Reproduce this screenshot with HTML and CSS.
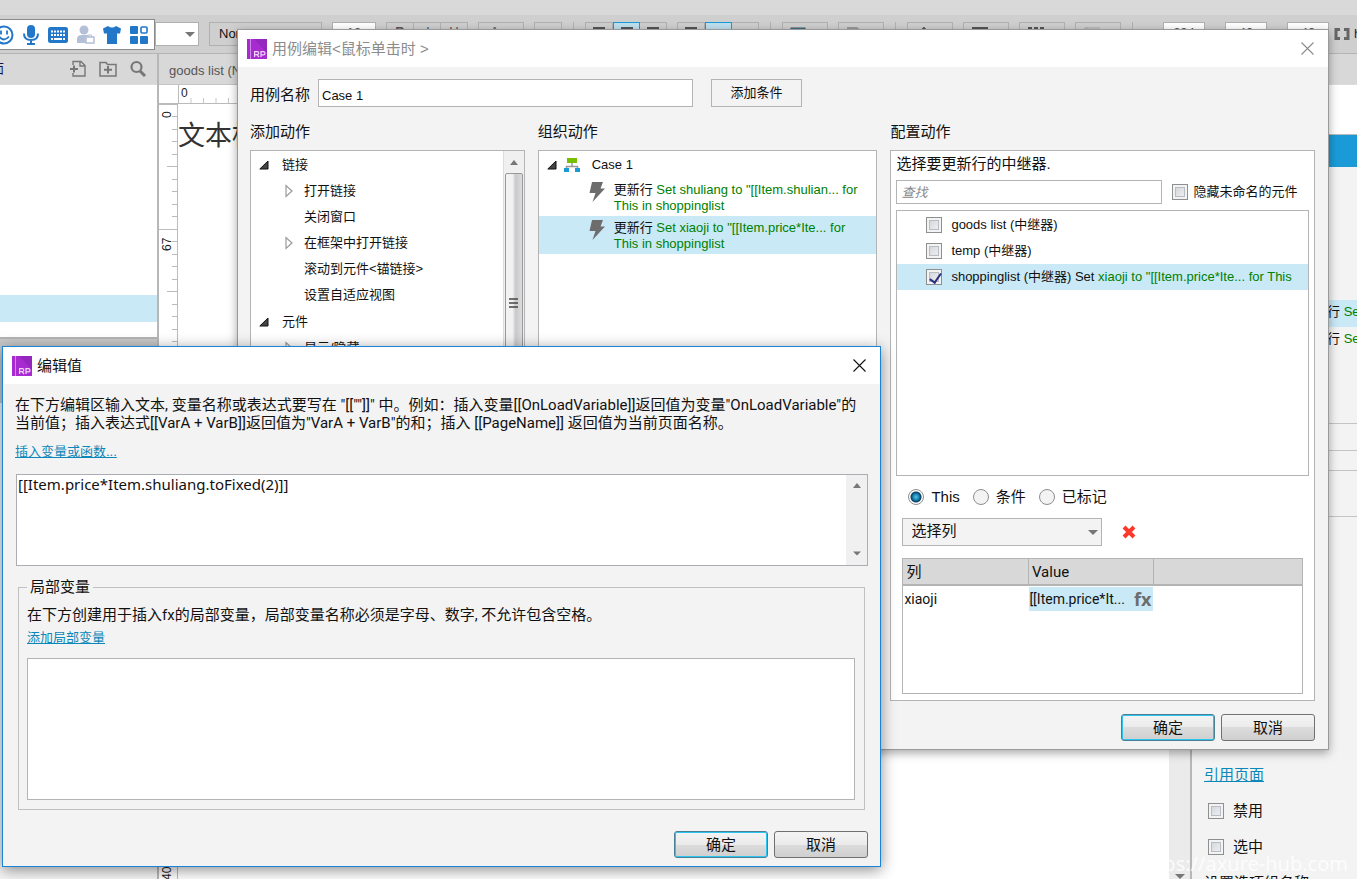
FILE: index.html
```html
<!DOCTYPE html>
<html lang="zh-CN">
<head>
<meta charset="utf-8">
<meta name="viewport" content="width=device-width, initial-scale=1">
<title>用例编辑</title>
<link rel="stylesheet" href="styles.css">
</head>
<body>
<svg class="defs" aria-hidden="true">
  <defs>
    <symbol id="rp" viewBox="0 0 20 20">
      <rect width="20" height="20" fill="#a82bd0"/>
      <path d="M7 0h13v14z" fill="#9427bd"/>
      <path d="M3.5 0v20" stroke="#cf86e6"/>
      <g fill="none" stroke="#f0d4fa" stroke-width="1.2"><path d="M7.6 18v-5.4h2.6q1.6 0 1.6 1.5t-1.6 1.5H7.6M10 15.6l2 2.4M14 18v-5.4h2.4q1.6 0 1.6 1.6t-1.6 1.6H14"/></g>
    </symbol>
    <symbol id="close" viewBox="0 0 13 13"><path d="M.5.5l12 12M12.500.5l-12 12" fill="none" stroke="currentColor" stroke-width="1.1"/></symbol>
    <symbol id="bolt" viewBox="0 0 16 20"><path d="M3 0h11l-2.500 6.500h4.500L3.500 20l3-9H.5z" fill="#6d6d6d"/></symbol>
    <symbol id="open" viewBox="0 0 10 10"><path d="M9 1v8H.8z" fill="#444" stroke="#111"/></symbol>
    <symbol id="shut" viewBox="0 0 8 14"><path d="M1 1.500v11L7 7z" fill="#fff" stroke="#999" stroke-width="1.200"/></symbol>
    <symbol id="up" viewBox="0 0 8 5"><path d="M0 5l4-5 4 5z" fill="#777"/></symbol>
    <symbol id="down" viewBox="0 0 10 5"><path d="M0 0h10L5 5z" fill="#777"/></symbol>
  </defs>
</svg>

<div class="app">
  <div class="menubar"></div>
  <div class="toolbar">
    <div class="tool white combo"><svg class="caret"><use href="#down"/></svg></div>
    <div class="tool style">Normal</div>
    <div class="tool white field">13</div>
    <div class="group"><span class="tool cell letter"><b>B</b></span><span class="tool cell letter"><i>I</i></span><span class="tool cell letter"><u>U</u></span></div>
    <div class="tool wide letter">A</div>
    <div class="tool cell"><svg class="glyph" viewBox="0 0 18 14"><path d="M0 3h3" stroke="#1a9bd8" stroke-width="2"/><path d="M5 3h11M5 8h11" stroke="#555" stroke-width="2"/></svg></div>
    <span class="sep"></span>
    <div class="group">
      <span class="tool cell"><svg class="glyph" viewBox="0 0 18 14"><path d="M3 1h12M3 5h8" stroke="#555" stroke-width="2"/></svg></span>
      <span class="tool cell on"><svg class="glyph" viewBox="0 0 18 14"><path d="M3 1h12M5 5h8" stroke="#555" stroke-width="2"/></svg></span>
      <span class="tool cell"><svg class="glyph" viewBox="0 0 18 14"><path d="M3 1h12M7 5h8" stroke="#555" stroke-width="2"/></svg></span>
    </div>
    <div class="group">
      <span class="tool cell"><svg class="glyph" viewBox="0 0 18 14"><path d="M3 1h12M3 5h12" stroke="#555" stroke-width="2"/></svg></span>
      <span class="tool cell on"><svg class="glyph" viewBox="0 0 18 14"><path d="M4 4h10" stroke="#6aa7c2" stroke-width="2"/></svg></span>
      <span class="tool cell"></span>
    </div>
    <span class="sep"></span>
    <div class="tool wide"><svg class="glyph" viewBox="0 0 18 14"><rect x="1" y="1" width="14" height="12" fill="#1a8fc4" stroke="#555"/></svg></div>
    <div class="tool wide"><svg class="glyph" viewBox="0 0 18 14"><path d="M1 0h10l4 3v11H1z" fill="#999"/></svg></div>
    <span class="sep"></span>
    <div class="tool wide"><svg class="glyph" viewBox="0 0 18 14"><path d="M4 6l5-5 3 4" fill="none" stroke="#555" stroke-width="2"/></svg></div>
    <div class="tool wide"><svg class="glyph" viewBox="0 0 18 14"><path d="M1 0h16v5H1z" fill="#555"/></svg></div>
    <div class="tool wide"><svg class="glyph" viewBox="0 0 18 14"><path d="M1 1h16" stroke="#555" stroke-width="3" stroke-dasharray="4 2"/></svg></div>
    <div class="tool wide"><svg class="glyph" viewBox="0 0 18 14"><path d="M2 1h15M5 0L1 2l4 2" fill="none" stroke="#aaa"/></svg></div>
    <span class="sep"></span>
    <div class="dims"><span class="tool white dim">294</span><span class="tool white dim">40</span><span class="tool white dim">40</span></div>
    <div class="hidden-size"><svg class="bracket" viewBox="0 0 16 12"><path d="M6 1.500H2v9h4M10 1.500h4v9h-4" fill="none" stroke="#666" stroke-width="3"/></svg>h</div>
  </div>

  <div class="workspace">
    <aside class="pages">
      <header class="pane-head">
        <span class="cut">页面</span>
        <svg class="ico" viewBox="0 0 18 18"><path d="M4 5V1.500h8l4 4V16H4v-3M11 1.500V6h5" fill="none" stroke="#777" stroke-width="1.400"/><path d="M1 9h8M5 5.500v7" stroke="#777" stroke-width="2"/></svg>
        <svg class="ico" viewBox="0 0 18 18"><path d="M1 2.500h6l1.500 2H17V16H1z" fill="none" stroke="#777" stroke-width="1.500"/><path d="M5 9.800h8M9 6v7.500" stroke="#777" stroke-width="2"/></svg>
        <svg class="ico" viewBox="0 0 18 18"><circle cx="7.500" cy="7" r="5" fill="none" stroke="#777" stroke-width="2.200"/><path d="M11 11l5 5" stroke="#777" stroke-width="3"/></svg>
      </header>
      <div class="page-list"><div class="cut">list</div><div class="page-on"></div></div>
      <div class="lib-head"></div>
      <div class="lib"></div>
    </aside>
    <main class="canvas">
      <div class="tab">goods list (New)</div>
      <div class="ruler-row">
        <span class="corner"></span>
        <svg class="ruler-h"><defs><pattern id="th" width="12.500" height="18" patternUnits="userSpaceOnUse"><path d="M12.200 13v5" stroke="#bbb"/></pattern></defs><rect width="100%" height="18" fill="url(#th)"/><text x="2" y="12" class="tick">0</text></svg>
      </div>
      <div class="stage-row">
        <svg class="ruler-v">
          <defs><pattern id="tv" width="18" height="125" patternUnits="userSpaceOnUse"><path d="M0 .5h18M13 12.500h5M13 25.500h5M13 37.500h5M13 50.500h5M8 62.500h10M13 75.500h5M13 87.500h5M13 100.500h5M13 112.500h5" stroke="#bbb"/></pattern></defs>
          <rect width="18" height="100%" fill="url(#tv)"/>
          <text class="tick" transform="translate(12 14) rotate(-90)">0</text>
          <text class="tick" transform="translate(12 147) rotate(-90)">67</text>
          <text class="tick" transform="translate(12 776) rotate(-90)">40</text>
        </svg>
        <div class="stage">文本框</div>
        <div class="vscroll"><svg class="caret"><use href="#down"/></svg></div>
      </div>
    </main>
    <aside class="props">
      <div class="pane-head"></div>
      <div class="props-name"></div>
      <div class="props-tab"></div>
      <div class="events">
        <div class="event event-on"><span>行</span> Set</div>
        <div class="event"><span>行</span> Set</div>
      </div>
      <div class="rule r1"></div><div class="rule r2"></div><div class="rule r3"></div><div class="rule r4"></div>
      <div class="props-body">
        <a href="#ref">引用页面</a>
        <label><input class="check" type="checkbox">禁用</label>
        <label><input class="check" type="checkbox">选中</label>
        <span>设置选项组名称</span>
      </div>
    </aside>
  </div>
</div>

<div class="ime">
  <svg class="ime-icon" viewBox="0 0 20 20"><circle cx="10" cy="10" r="8.500" fill="none" stroke="#2277c9" stroke-width="2"/><path d="M7 5.500v4M13 5.500v4M5 11.500q5 6 10 0" fill="none" stroke="#2277c9" stroke-width="1.800"/></svg>
  <svg class="ime-icon" viewBox="0 0 20 20"><rect x="6" y="0" width="8" height="13" rx="4" fill="#2277c9"/><path d="M3 8.500q0 6.500 7 6.500t7-6.500M10 14v5M6 19h8" fill="none" stroke="#2277c9" stroke-width="2"/></svg>
  <svg class="ime-icon" viewBox="0 0 20 20"><rect x="0" y="2" width="20" height="16" rx="2.500" fill="#2277c9"/><path d="M3 6.500h14M3 10h14" stroke="#fff" stroke-width="2" stroke-dasharray="2 1"/><path d="M3 14h2M6 14h8M15 14h2" stroke="#fff" stroke-width="2"/></svg>
  <svg class="ime-icon" viewBox="0 0 20 20"><g fill="#b4c0d8"><circle cx="9" cy="5" r="4.500"/><path d="M2 18v-4q0-4 5-4h4q4 0 4 3v5z"/></g><rect x="11" y="12" width="8" height="6" fill="#fff" stroke="#b4c0d8" stroke-width="1.500"/><path d="M12.500 12v-2h4v2" fill="none" stroke="#b4c0d8"/></svg>
  <svg class="ime-icon" viewBox="0 0 20 20"><path d="M6 1q4 3 8 0l5 2.500-1 5h-3V19H5V8.500H2l-1-5z" fill="#2277c9"/></svg>
  <svg class="ime-icon" viewBox="0 0 20 20"><g fill="#2277c9"><rect x="1" y="1" width="8" height="8" rx="1"/><rect x="1" y="11" width="8" height="8" rx="1"/><rect x="11" y="11" width="8" height="8" rx="1"/></g><rect x="12" y="2" width="6" height="6" rx="1" fill="none" stroke="#2277c9" stroke-width="1.600"/></svg>
</div>

<div class="watermark">https://axure-hub.com</div>

<section class="dialog case-dialog" role="dialog" aria-label="用例编辑">
  <header class="title"><svg class="logo"><use href="#rp"/></svg><span>用例编辑&lt;鼠标单击时 &gt;</span><button class="close" aria-label="关闭"><svg><use href="#close"/></svg></button></header>
  <div class="case-body">
    <div class="name-row">
      <label for="case-name">用例名称</label>
      <input id="case-name" class="name" type="text" value="Case 1">
      <button class="flat">添加条件</button>
    </div>
    <div class="columns">
      <section class="column">
        <h2>添加动作</h2>
        <div class="box split">
          <div class="tree">
            <div class="branch">
              <div class="node"><svg class="open"><use href="#open"/></svg>链接</div>
              <div class="node leaf"><svg class="shut"><use href="#shut"/></svg>打开链接</div>
              <div class="node leaf"><i class="shut"></i>关闭窗口</div>
              <div class="node leaf"><svg class="shut"><use href="#shut"/></svg>在框架中打开链接</div>
              <div class="node leaf"><i class="shut"></i>滚动到元件&lt;锚链接&gt;</div>
              <div class="node leaf"><i class="shut"></i>设置自适应视图</div>
            </div>
            <div class="branch">
              <div class="node"><svg class="open"><use href="#open"/></svg>元件</div>
              <div class="node leaf"><svg class="shut"><use href="#shut"/></svg>显示/隐藏</div>
            </div>
          </div>
          <div class="bar"><svg class="arrow"><use href="#up"/></svg><div class="thumb"><svg class="grip" viewBox="0 0 9 11"><path d="M0 1h9M0 5h9M0 9h9" stroke="#444" stroke-width="1.500"/></svg></div></div>
        </div>
      </section>
      <section class="column">
        <h2>组织动作</h2>
        <div class="box flow-box">
          <div class="node case"><svg class="open"><use href="#open"/></svg><svg class="flow" viewBox="0 0 16 15"><path d="M8 5v4M2.500 11V8.500h11V11" fill="none" stroke="#999" stroke-width="1.500"/><rect x="3" y="0" width="10" height="5" fill="#76c000"/><rect x="0" y="10" width="5" height="4" fill="#1a9bd8"/><rect x="11" y="10" width="5" height="4" fill="#1a9bd8"/></svg>Case 1</div>
          <div class="action"><svg class="bolt"><use href="#bolt"/></svg><p><b>更新行</b> Set shuliang to "[[Item.shulian... for<br>This in shoppinglist</p></div>
          <div class="action selected"><svg class="bolt"><use href="#bolt"/></svg><p><b>更新行</b> Set xiaoji to "[[Item.price*Ite... for<br>This in shoppinglist</p></div>
        </div>
      </section>
      <section class="column">
        <h2>配置动作</h2>
        <div class="box config">
          <p class="hint">选择要更新行的中继器.</p>
          <div class="search-row">
            <input class="search" type="text" placeholder="查找" aria-label="查找">
            <label><input class="check" type="checkbox">隐藏未命名的元件</label>
          </div>
          <div class="repeaters">
            <label class="rep"><input class="check" type="checkbox"><span>goods list (中继器)</span></label>
            <label class="rep"><input class="check" type="checkbox"><span>temp (中继器)</span></label>
            <label class="rep selected"><input class="check" type="checkbox" checked><span>shoppinglist (中继器) Set <em>xiaoji to "[[Item.price*Ite... for This</em></span></label>
          </div>
          <div class="radios">
            <label><input class="radio" type="radio" name="scope" checked>This</label>
            <label><input class="radio" type="radio" name="scope">条件</label>
            <label><input class="radio" type="radio" name="scope">已标记</label>
          </div>
          <div class="select-row">
            <div class="select-wrap"><select aria-label="选择列"><option>选择列</option></select><svg class="caret"><use href="#down"/></svg></div>
            <button class="remove" aria-label="删除"><svg viewBox="0 0 14 14"><path d="M2 2l10 10M12 2L2 12" stroke="#fb3a2c" stroke-width="4"/></svg></button>
          </div>
          <div class="grid-box">
            <table>
              <thead><tr><th>列</th><th>Value</th><th></th></tr></thead>
              <tbody><tr><td>xiaoji</td><td><div class="value"><span>[[Item.price*It...</span><b>fx</b></div></td><td></td></tr></tbody>
            </table>
          </div>
        </div>
      </section>
    </div>
    <footer class="actions"><button class="push primary">确定</button><button class="push">取消</button></footer>
  </div>
</section>

<section class="dialog value-dialog" role="dialog" aria-label="编辑值">
  <header class="title"><svg class="logo"><use href="#rp"/></svg><span>编辑值</span><button class="close" aria-label="关闭"><svg><use href="#close"/></svg></button></header>
  <div class="value-body">
    <p class="desc">在下方编辑区输入文本, 变量名称或表达式要写在 "[[""]]" 中。例如：插入变量[[OnLoadVariable]]返回值为变量"OnLoadVariable"的<br>当前值；插入表达式[[VarA + VarB]]返回值为"VarA + VarB"的和；插入 [[PageName]] 返回值为当前页面名称。</p>
    <a class="insert" href="#insert">插入变量或函数...</a>
    <div class="editor">
      <textarea aria-label="表达式">[[Item.price*Item.shuliang.toFixed(2)]]</textarea>
      <div class="ebar"><svg class="arrow"><use href="#up"/></svg><svg class="arrow"><use href="#down"/></svg></div>
    </div>
    <fieldset>
      <legend>局部变量</legend>
      <p>在下方创建用于插入fx的局部变量，局部变量名称必须是字母、数字, 不允许包含空格。</p>
      <a href="#add">添加局部变量</a>
      <div class="locals"></div>
    </fieldset>
    <footer class="actions"><button class="push primary">确定</button><button class="push">取消</button></footer>
  </div>
</section>
</body>
</html>
```
FILE: styles.css
```css
* { box-sizing: border-box; }
body {
  margin: 0;
  height: 100vh;
  position: relative;
  overflow: hidden;
  font: 13px/16px "Liberation Sans", "Noto Sans CJK SC", sans-serif;
  color: #111;
  background: #fff;
}
h2, p { margin: 0; font-weight: normal; }
h2 { font-size: 15px; line-height: 20px; padding: 15px 0 8px; }
button, input, select, textarea { font: inherit; color: inherit; margin: 0; border-radius: 0; }
a { color: #0b87b9; }
svg { display: block; flex: none; }
.defs { position: absolute; width: 0; height: 0; }

/* application behind the dialogs */
.app { height: 100%; display: flex; flex-direction: column; }
.menubar { height: 15px; background: #d9d9d9; flex: none; }
.toolbar {
  height: 39px; flex: none; display: flex; gap: 10px;
  padding: 7px 0 8px 155px;
  background: #cfcfcf; border-bottom: 1px solid #b4b4b4;
}
.tool { height: 24px; flex: none; border: 1px solid #b0b0b0; display: flex; justify-content: center; line-height: 22px; color: #555; }
.white { background: #fff; }
.combo { width: 44px; justify-content: flex-end; align-items: center; padding-right: 3px; }
.style { width: 113px; color: #111; justify-content: flex-start; padding-left: 9px; }
.field { width: 44px; line-height: 20px; }
.dim { width: 42px; line-height: 20px; }
.group { display: flex; flex: none; }
.cell { width: 28px; padding-top: 4px; line-height: 16px; }
.cell + .cell { width: 27px; border-left: 0; }
.group .on { border: 1px solid #1a9bd8; background: #bfe0ee; }
.wide { width: 46px; padding: 4px 13px 0 0; line-height: 16px; }
.letter { padding-top: 1px; }
.glyph { width: 18px; height: 14px; }
.sep { width: 1px; height: 24px; margin: 0 1px; background: #b0b0b0; flex: none; }
.dims { display: flex; gap: 20px; margin-left: 19px; }
.hidden-size { display: flex; align-items: center; gap: 4px; color: #224; flex: none; margin-left: -5px; }
.bracket { width: 16px; height: 12px; }
.caret { width: 10px; height: 5px; }

.workspace { flex: 1; min-height: 0; display: flex; }
.pane-head { height: 31px; flex: none; background: #d8d8d8; display: flex; align-items: center; gap: 12px; padding-right: 10px; border-bottom: 1px solid #ddd; }
.pages { width: 159px; flex: none; border-right: 2px solid #b7b7b7; display: flex; flex-direction: column; }
.ico { width: 18px; height: 18px; }
.cut { margin-left: -22px; color: #114; }
.pages .pane-head .cut { margin-right: auto; }
.page-list { height: 252px; }
.page-list .cut { margin-left: -18px; padding: 134px 0 60px; }
.page-on { height: 27px; background: #c9e9f7; }
.lib-head { height: 66px; background: #c8c8c8; border-top: 2px solid #b4b4b4; }
.lib { flex: 1; background: #f6f6f6; }

.canvas { flex: 1; min-width: 0; display: flex; flex-direction: column; }
.tab { height: 31px; background: #d8d8d8; padding-left: 10px; line-height: 33px; color: #555; border-bottom: 1px solid #c4c4c4; flex: none; }
.ruler-row { display: flex; flex: none; height: 19px; border-bottom: 1px solid #bbb; }
.corner { width: 20px; border-right: 1px solid #bbb; flex: none; }
.ruler-h { flex: 1; height: 18px; }
.tick { font-size: 12px; fill: #222; }
.stage-row { flex: 1; min-height: 0; display: flex; }
.ruler-v { width: 19px; height: 100%; border-right: 1px solid #bbb; }
.stage { flex: 1; min-width: 0; font-size: 27px; line-height: 40px; padding-top: 12px; color: #333; }
.vscroll { width: 21px; background: #ebebeb; display: flex; flex-direction: column; justify-content: flex-end; align-items: center; }

.props { width: 167px; flex: none; border-left: 2px solid #b7b7b7; background: #f3f3f3; display: flex; flex-direction: column; }
.props-name { height: 50px; background: #fff; border-bottom: 1px solid #bbb; flex: none; }
.props-tab { height: 32px; background: #1a9bd8; flex: none; }
.events { padding-top: 133px; height: 256px; flex: none; }
.event { height: 27px; line-height: 24px; padding-left: 135px; white-space: nowrap; color: #008000; overflow: hidden; }
.event span { color: #111; }
.event-on { background: #c9e9f7; }
.rule { border-top: 1px solid #c4c4c4; flex: none; }
.r1 { height: 27px; }
.r2 { height: 20px; }
.r3 { height: 46px; }
.r4 { height: 246px; }
.props-body { display: flex; flex-direction: column; gap: 16px; padding: 3px 0 0 12px; font-size: 15px; line-height: 20px; }
.props-body a { align-self: flex-start; }
.props-body label { display: flex; align-items: center; gap: 9px; padding-left: 4px; }

.ime {
  position: absolute; left: 0; top: 19px; height: 31px; width: 155px;
  display: flex; align-items: center; gap: 7px; overflow: hidden; justify-content: flex-end; padding-right: 5px;
  background: #fff; border: 1px solid #8a8a8a; border-left: 0;
}
.ime-icon { width: 20px; height: 20px; }
.watermark { position: absolute; right: 9px; bottom: 3px; font: 20px/24px "Noto Sans", sans-serif; color: rgba(255, 255, 255, .8); }

/* dialogs */
.dialog { position: absolute; background: #f3f3f3; }
.case-dialog { left: 237px; right: 28px; top: 29px; border: 1px solid #9a9a9a; box-shadow: 0 3px 9px rgba(0, 0, 0, .35); }
.value-dialog { left: 2px; top: 346px; width: 879px; border: 1px solid #1883d7; box-shadow: 0 3px 14px rgba(0, 0, 0, .45); }
.title { height: 37px; background: #fff; display: flex; align-items: center; gap: 5px; padding: 0 14px 0 9px; font-size: 15px; }
.case-dialog .title { color: #8c8c8c; }
.logo { width: 20px; height: 20px; }
.close { margin-left: auto; padding: 0; border: 0; background: none; }
.close svg { width: 13px; height: 13px; }

.case-body { padding: 12px 13px 8px 12px; }
.name-row { display: flex; align-items: center; }
.name-row label { font-size: 15px; width: 68px; padding-top: 4px; line-height: 20px; }
.name { width: 375px; height: 28px; padding: 4px 3px 0; border: 1px solid #b4b4b4; background: #fff; }
.flat { width: 91px; height: 28px; margin-left: 18px; border: 1px solid #b4b4b4; background: #f3f3f3; }
.columns { display: grid; grid-template-columns: 275fr 340fr 425fr; column-gap: 13px; }
.column { display: flex; flex-direction: column; min-width: 0; }
.box { flex: 1; border: 1px solid #b4b4b4; background: #fff; }
.split { display: flex; }
.tree { flex: 1; padding-top: 1px; }
.flow-box { padding-top: 1px; }
.branch { margin-bottom: 1px; }
.node { height: 26px; display: flex; align-items: center; padding-left: 8px; }
.open { width: 10px; height: 10px; margin-right: 13px; }
.leaf { padding-left: 34px; }
.shut { width: 8px; height: 14px; margin-right: 11px; }
.bar { width: 21px; background: #f0f0f0; border-left: 1px solid #ddd; display: flex; flex-direction: column; align-items: center; padding: 9px 1px 0; }
.arrow { width: 8px; height: 5px; }
.thumb { width: 100%; flex: 1; margin-top: 8px; border: 1px solid #999; border-radius: 2px; background: linear-gradient(90deg, #f2f2f2 40%, #c8c9cc 60%, #dcdcdc); display: flex; justify-content: center; padding-top: 124px; }
.grip { width: 9px; height: 11px; }
.case .open { margin-right: 7px; }
.flow { width: 16px; height: 15px; margin-right: 12px; }
.action { display: flex; gap: 9px; padding: 4px 4px 2px 50px; color: #008000; white-space: nowrap; }
.action b { font-weight: normal; color: #111; }
.bolt { width: 16px; height: 20px; }
.selected { background: #c9e9f7; }

.config { padding: 3px 5px 6px; }
.hint { font-size: 15px; line-height: 20px; }
.search-row { display: flex; align-items: center; gap: 10px; padding: 6px 0; }
.search { width: 266px; height: 24px; border: 1px solid #b4b4b4; padding: 0 4px; font-style: italic; }
.search::placeholder { color: #888; opacity: 1; }
.search-row label { display: flex; align-items: center; gap: 5px; white-space: nowrap; }
.check { appearance: none; flex: none; width: 16px; height: 16px; border: 1px solid #8e8f8f; background: linear-gradient(135deg, #cdd0d6, #f6f6f6); box-shadow: inset 0 0 0 2px #f3f3f3, inset 0 0 0 3px #b8bcc4; position: relative; }
.check:checked::after { content: ""; position: absolute; left: 5px; top: 1px; width: 5px; height: 10px; border: solid #2b2f80; border-width: 0 2px 2px 0; transform: rotate(35deg); }
.repeaters { border: 1px solid #b4b4b4; min-height: 266px; padding-top: 1px; }
.rep { height: 26px; display: flex; align-items: center; gap: 9px; padding-left: 29px; white-space: nowrap; }
.rep em { font-style: normal; color: #008000; }
.radios { display: flex; gap: 13px; padding: 11px 12px 11px; font-size: 15px; line-height: 20px; }
.radios label { display: flex; align-items: center; gap: 7px; }
.radio { appearance: none; width: 16px; height: 16px; border: 1px solid #8e8e8e; border-radius: 50%; background: #f3f3f3; }
.radio:checked { background: radial-gradient(circle at 50% 50%, #5cc4e8 0, #1583b0 3px, #0c3d63 5px, #fff 6px); }
.select-row { display: flex; align-items: center; gap: 20px; padding-left: 6px; }
.select-wrap { display: grid; align-items: center; width: 200px; }
.select-wrap > * { grid-area: 1 / 1; }
.select-wrap .caret { justify-self: end; margin-right: 4px; pointer-events: none; }
select { appearance: none; height: 28px; border: 1px solid #b4b4b4; background: #f3f3f3; padding: 0 8px 2px; font-size: 15px; }
.remove { border: 0; padding: 0; background: none; }
.remove svg { width: 14px; height: 14px; }
.grid-box { margin: 12px 6px 0; min-height: 136px; border: 1px solid #b4b4b4; background: #fff; }
table { width: 100%; border-collapse: collapse; table-layout: fixed; font: 14px/16px Roboto, "Noto Sans CJK SC", sans-serif; }
th { height: 26px; background: #d8d8d8; font-size: 15px; font-weight: normal; text-align: left; padding: 0 3px; border-right: 1px solid #b4b4b4; border-bottom: 2px solid #b4b4b4; width: 125px; }
th:last-child { width: auto; border-right: 0; }
td { height: 26px; padding: 0 0 0 1px; }
.value { display: flex; align-items: center; justify-content: space-between; height: 24px; background: #c9e9f7; padding-right: 2px; white-space: nowrap; }
.value b { font: bold 18px/20px "Open Sans", sans-serif; color: #6d6d6d; }

.actions { display: flex; justify-content: flex-end; gap: 6px; padding-top: 13px; }
.push { width: 94px; height: 27px; padding: 0; border: 1px solid #707070; border-radius: 3px; font-size: 15px; background: linear-gradient(#f4f4f4, #ebebeb 50%, #dcdcdc 50%, #cfcfcf); }
.primary { border-color: #4a7f96; box-shadow: inset 0 0 0 1px #2cc4f0; }

.value-body { padding: 12px 12px 8px; }
.desc { font: 15px/18px Roboto, "Noto Sans CJK SC", sans-serif; white-space: nowrap; }
.insert { display: inline-block; margin: 12px 0 14px; }
.editor { display: flex; margin: 0 0 0 1px; border: 1px solid #abadb3; background: #fff; height: 92px; }
.editor textarea { flex: 1; border: 0; padding: 0 1px; resize: none; overflow: hidden; background: none; font: 15px/18px "Noto Sans", sans-serif; }
.ebar { width: 21px; background: #f0f0f0; display: flex; flex-direction: column; justify-content: space-between; align-items: center; padding: 8px 0 9px; }
fieldset { margin: 11px 3px 0; border: 1px solid #c0c0c0; padding: 8px 9px 9px 8px; min-width: 0; }
legend { font-size: 15px; line-height: 20px; padding: 0 3px; }
fieldset p { font: 15px/20px Roboto, "Noto Sans CJK SC", sans-serif; }
fieldset a { display: inline-block; margin: 5px 0 12px; }
.locals { height: 142px; border: 1px solid #b4b4b4; background: #fff; }
.value-body .actions { padding-top: 21px; }
```
